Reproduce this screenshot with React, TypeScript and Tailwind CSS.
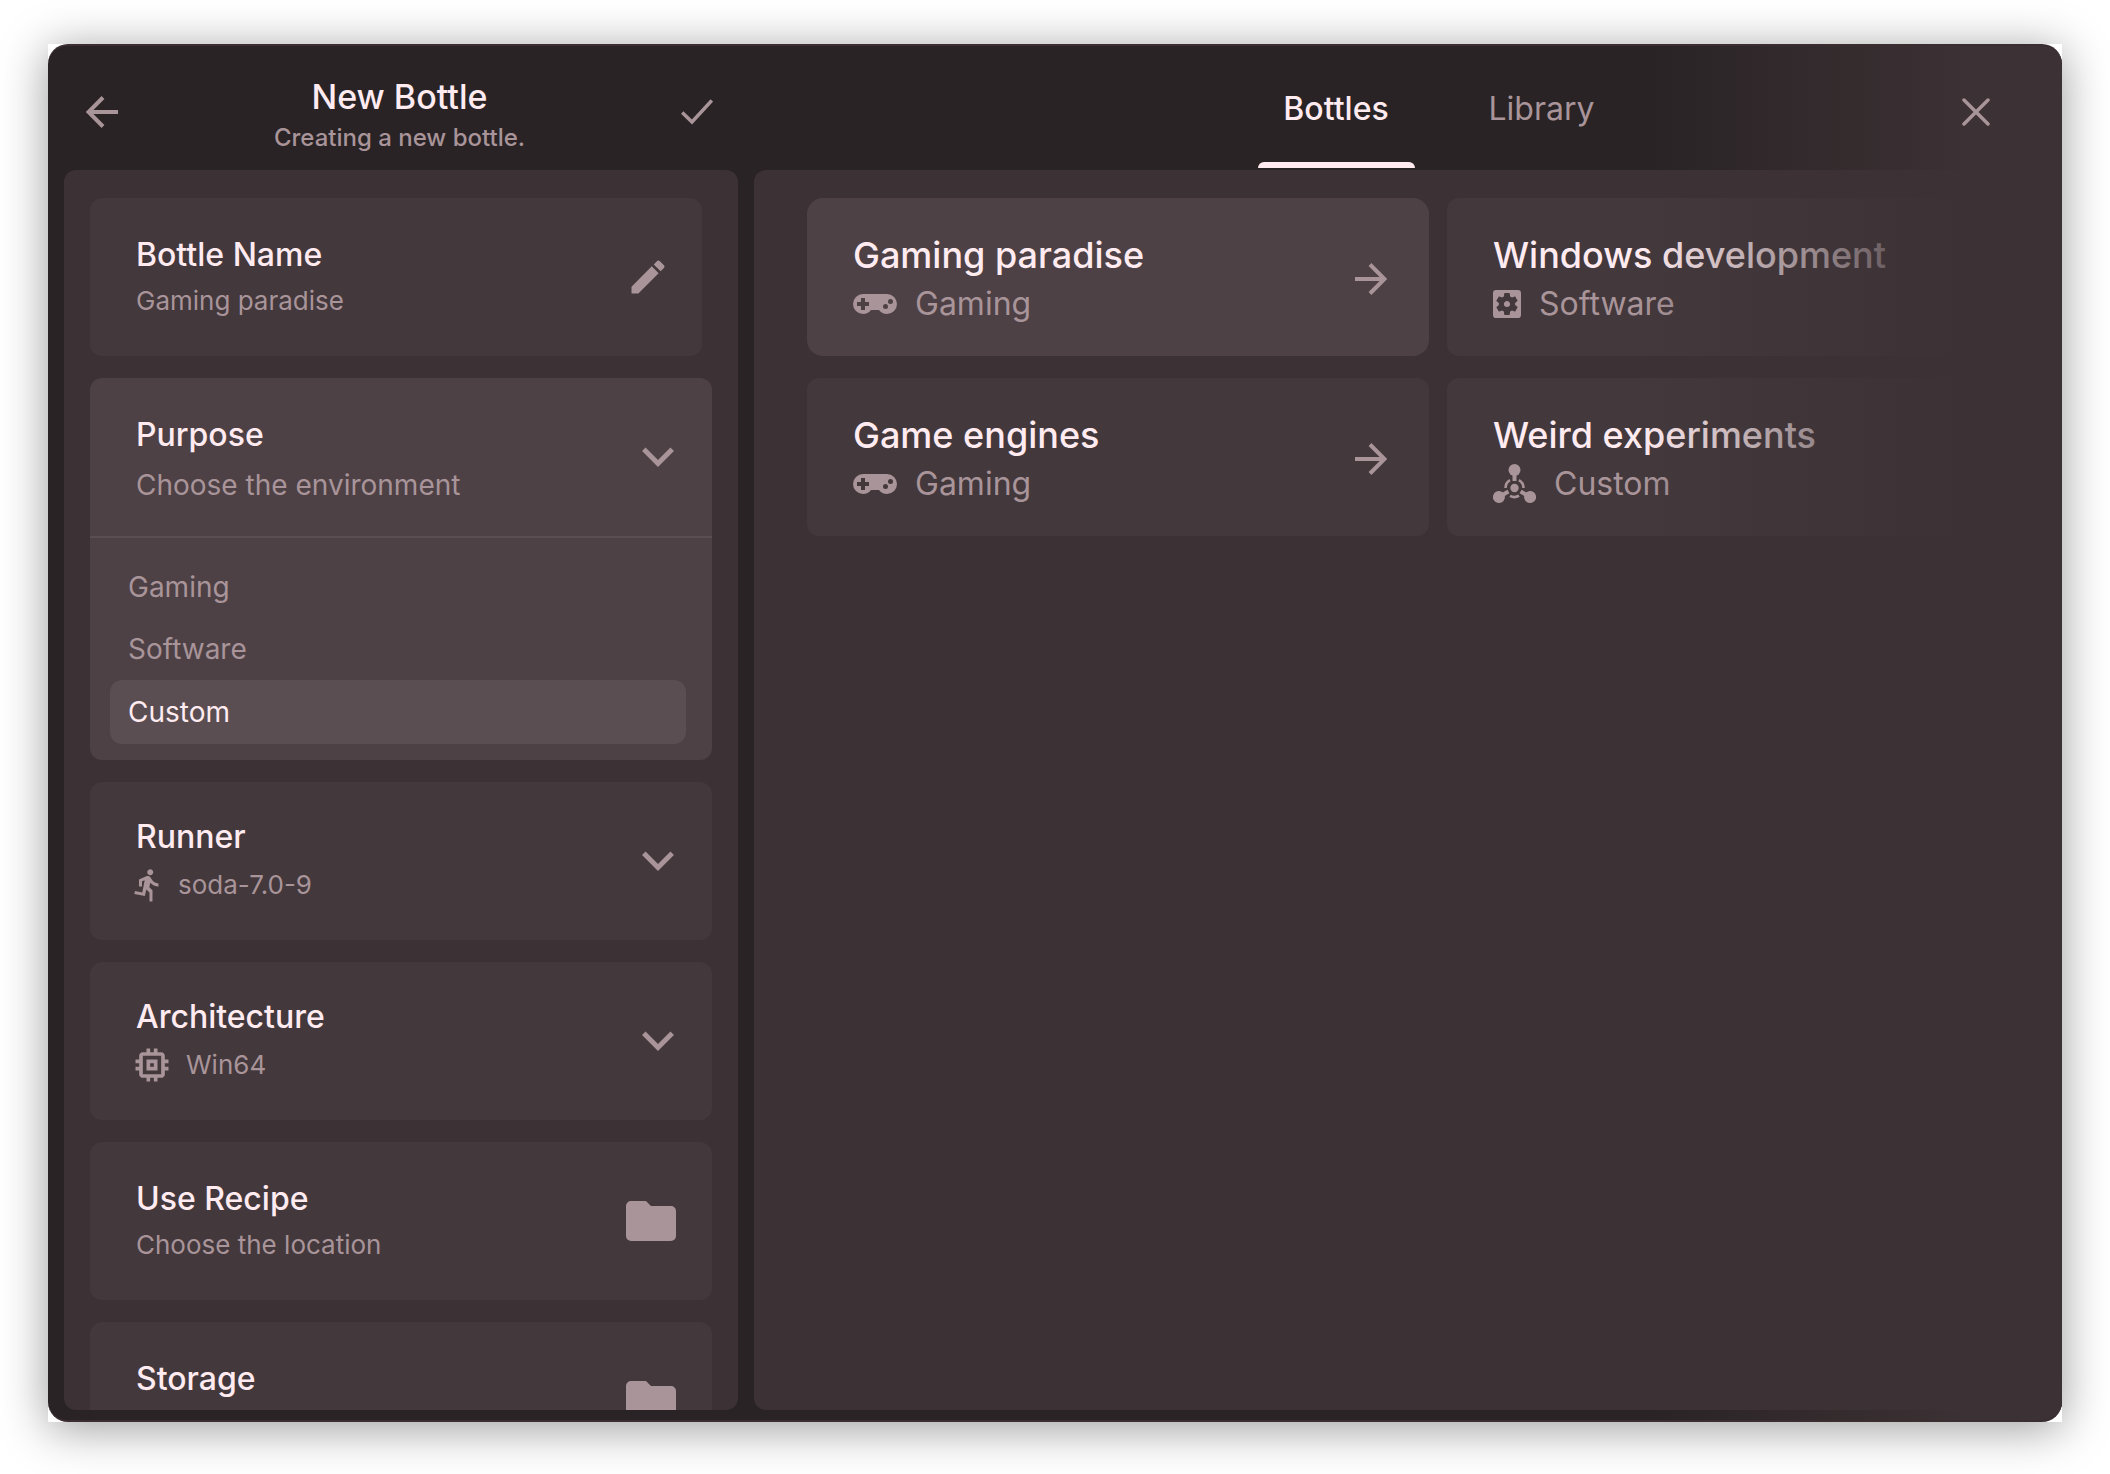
import type { ReactNode } from "react";
import { MdDirectionsRun, MdEdit, MdMemory } from "react-icons/md";

const ink = "text-[#a89499]";

function ArrowIcon({ className = "" }: { className?: string }) {
  return (
    <svg viewBox="0 0 32 32" className={`size-8 shrink-0 ${className}`} fill="none" stroke="currentColor" strokeWidth="4" aria-hidden="true">
      <path d="M0 16H30M15 1.500 29.500 16 15 30.500" />
    </svg>
  );
}

function ChevronIcon() {
  return (
    <svg viewBox="0 0 32 20" className={`h-5 w-8 shrink-0 ${ink}`} fill="none" stroke="currentColor" strokeWidth="5" aria-hidden="true">
      <path d="M1.800 2.300 16 16.400 30.200 2.300" />
    </svg>
  );
}

function FolderIcon() {
  return (
    <svg viewBox="0 0 50 40" className={`h-10 w-[50px] shrink-0 ${ink}`} fill="currentColor" aria-hidden="true">
      <path d="M5 0H20L25 5H45A5 5 0 0 1 50 10V35A5 5 0 0 1 45 40H5A5 5 0 0 1 0 35V5A5 5 0 0 1 5 0Z" />
    </svg>
  );
}

function GamepadIcon() {
  return (
    <svg viewBox="0 0 22 10" className="h-5 w-11 shrink-0" fill="currentColor" fillRule="evenodd" aria-hidden="true">
      <path d="M5 0H17a5 5 0 0 1 0 10c-1.640 0-3.090-.79-4-2H9c-.91 1.210-2.360 2-4 2A5 5 0 0 1 5 0ZM4 2v2H2v2h2v2h2V6h2V4H6V2ZM16.250 5a1.250 1.250 0 1 0 0 2.500a1.250 1.250 0 0 0 0-2.500ZM18.750 2.500a1.250 1.250 0 1 0 0 2.500a1.250 1.250 0 0 0 0-2.500Z" />
    </svg>
  );
}

function CogBoxIcon() {
  return (
    <svg viewBox="3 3 18 18" className="size-7 shrink-0" fill="currentColor" aria-hidden="true">
      <path d="M12 10c-1.100 0-2 .9-2 2s.9 2 2 2 2-.9 2-2-.9-2-2-2zm7-7H5a2 2 0 0 0-2 2v14a2 2 0 0 0 2 2h14a2 2 0 0 0 2-2V5a2 2 0 0 0-2-2zm-1.750 9c0 .23-.02.46-.05.68l1.480 1.160c.13.11.17.3.08.45l-1.400 2.420c-.09.15-.27.21-.43.15l-1.740-.7c-.36.28-.76.51-1.180.69l-.26 1.850c-.03.17-.18.3-.35.3h-2.800c-.17 0-.32-.13-.35-.29l-.26-1.850c-.43-.18-.82-.41-1.180-.69l-1.740.7c-.16.06-.34 0-.43-.15l-1.400-2.420a.35.35 0 0 1 .08-.45l1.480-1.160c-.03-.23-.05-.46-.05-.69 0-.23.02-.46.05-.68l-1.480-1.160a.35.35 0 0 1-.08-.45l1.400-2.420c.09-.15.27-.21.43-.15l1.740.7c.36-.28.76-.51 1.180-.69l.26-1.850c.03-.17.18-.3.35-.3h2.800c.17 0 .32.13.35.29l.26 1.850c.43.18.82.41 1.180.69l1.740-.7c.16-.06.34 0 .43.15l1.400 2.420c.09.15.05.34-.08.45l-1.480 1.160c.03.23.05.46.05.69z" />
    </svg>
  );
}

function MoleculeIcon() {
  return (
    <svg viewBox="0 0 43 40" className="h-10 w-[43px] shrink-0" fill="currentColor" aria-hidden="true">
      <circle cx="21.500" cy="24" r="4.200" />
      {[0, 120, 240].map((a) => (
        <g key={a} transform={`rotate(${a} 21.500 24)`}>
          <circle cx="21.500" cy="6" r="6" />
          <path d="M19.500 10h4v7h-4z" />
          <path d="M25.900 16.200A9 9 0 0 1 30.500 24" fill="none" stroke="currentColor" strokeWidth="2.600" />
        </g>
      ))}
    </svg>
  );
}

function SettingCard({ title, detail, icon, action, className = "", pad = "pr-[38px]" }: { title: string; detail?: string; icon?: ReactNode; action: ReactNode; className?: string; pad?: string }) {
  return (
    <button type="button" className={`flex h-[158px] shrink-0 items-center justify-between rounded-xl bg-[#43383c] pl-[46px] text-left ${pad} ${className}`}>
      <span className={`flex flex-col ${icon ? "gap-1" : "gap-0.5 pt-0.5"}`}>
        <span className="text-[32px] leading-[44px] font-medium text-[#ffebf0]">{title}</span>
        <span className={`flex h-11 items-center text-[26px] leading-[44px] ${ink}`}>
          {icon}
          {detail}
        </span>
      </span>
      {action}
    </button>
  );
}

function BottleCard({ title, kind, icon, active = false }: { title: string; kind: string; icon: ReactNode; active?: boolean }) {
  return (
    <button type="button" className={`flex h-[158px] w-[622px] items-center justify-between pt-1 pr-[42px] pl-[46px] text-left ${active ? "rounded-2xl bg-[#4d4145]" : "rounded-xl bg-[#43383c]"}`}>
      <span className="flex flex-col gap-1">
        <span className="text-[36px] leading-[46px] font-medium whitespace-nowrap text-[#ffebf0]">{title}</span>
        <span className={`flex h-11 items-center gap-[18px] text-[32px] leading-[44px] ${ink}`}>
          {icon}
          {kind}
        </span>
      </span>
      <ArrowIcon className={ink} />
    </button>
  );
}

export default function App() {
  return (
    <div className="h-screen bg-white px-12 pt-11 pb-[52px] font-['Inter',sans-serif]">
      <div className="h-full bg-white shadow-[0_6px_44px_rgba(0,0,0,0.4)]">
        <div className="relative flex h-full flex-col overflow-hidden rounded-[20px] border-y-2 border-[#3a2e31] bg-[#292325]">
          <header className="flex h-[124px] shrink-0">
            <div className="flex w-[706px] shrink-0 items-center justify-between pt-2 pr-[41px] pl-[38px]">
              <button type="button" aria-label="Back" className={ink}>
                <ArrowIcon className="rotate-180" />
              </button>
              <div className="pt-2 text-center">
                <h1 className="text-[34px] leading-[44px] font-medium text-[#ffebf0]">New Bottle</h1>
                <p className={`text-[24px] leading-[38px] font-medium ${ink}`}>Creating a new bottle.</p>
              </div>
              <button type="button" aria-label="Create" className={ink}>
                <svg viewBox="0 0 32 26" className="h-[26px] w-8" fill="none" stroke="currentColor" strokeWidth="3.500" aria-hidden="true">
                  <path d="M1.200 13.500 11 23 30.800 1.500" />
                </svg>
              </button>
            </div>
            <nav className="flex grow justify-center pl-[110px]">
              <a href="#bottles" className="flex w-[157px] flex-col justify-between text-center text-[32px] font-medium text-[#ffebf0]">
                <span className="pt-10 leading-[46px]">Bottles</span>
                <span className="mb-0.5 h-1.5 rounded-t-md bg-[#ffebf0]" />
              </a>
              <a href="#library" className={`w-[254px] pt-10 text-center text-[32px] leading-[46px] ${ink}`}>
                Library
              </a>
            </nav>
          </header>
          <div className="flex min-h-0 grow gap-4 pb-2.5 pl-4">
            <aside className="flex w-[674px] shrink-0 flex-col gap-[22px] overflow-hidden rounded-xl bg-[#3c3134] px-[26px] pt-7">
              <SettingCard title="Bottle Name" detail="Gaming paradise" className="mr-2.5" action={<MdEdit className={`size-11 ${ink}`} />} pad="pr-8" />
              <section className="shrink-0 rounded-xl bg-[#4d4145] pb-4">
                <button type="button" className="flex h-[158px] w-full items-center justify-between pr-[38px] pl-[46px] text-left">
                  <span className="flex flex-col gap-1.5 pt-1.5">
                    <span className="text-[32px] leading-[44px] font-medium text-[#ffebf0]">Purpose</span>
                    <span className={`text-[28px] leading-[44px] ${ink}`}>Choose the environment</span>
                  </span>
                  <ChevronIcon />
                </button>
                <ul className="border-t-2 border-[#5a4e52] pt-[18px] pr-[26px] pl-5">
                  {["Gaming", "Software", "Custom"].map((name) => (
                    <li key={name}>
                      <button type="button" className={`block w-full rounded-xl px-[18px] text-left text-[28px] ${name === "Custom" ? "h-16 bg-[#5a4e52] text-[#ffebf0]" : "h-[62px] text-[#a89499]"}`}>
                        {name}
                      </button>
                    </li>
                  ))}
                </ul>
              </section>
              <SettingCard title="Runner" detail="soda-7.0-9" icon={<MdDirectionsRun className="mr-3 -ml-1.5 size-9" />} action={<ChevronIcon />} />
              <SettingCard title="Architecture" detail="Win64" icon={<MdMemory className="mr-3 -ml-1.5 size-11" />} action={<ChevronIcon />} />
              <SettingCard title="Use Recipe" detail="Choose the location" action={<FolderIcon />} pad="pr-9" />
              <SettingCard title="Storage" action={<FolderIcon />} pad="pr-9" />
            </aside>
            <main className="min-w-0 grow overflow-hidden rounded-tl-xl rounded-bl-xl bg-[#3c3134] pt-7 pl-[53px]">
              <div className="grid w-max grid-cols-2 gap-x-[18px] gap-y-[22px]">
                <BottleCard title="Gaming paradise" kind="Gaming" icon={<GamepadIcon />} active />
                <BottleCard title="Windows development" kind="Software" icon={<CogBoxIcon />} />
                <BottleCard title="Game engines" kind="Gaming" icon={<GamepadIcon />} />
                <BottleCard title="Weird experiments" kind="Custom" icon={<MoleculeIcon />} />
              </div>
            </main>
          </div>
          <div className="pointer-events-none absolute -inset-y-0.5 right-0 w-[422px] bg-linear-to-r from-[#3c3134]/0 to-[#3c3134] to-78%" />
          <button type="button" aria-label="Close" className={`absolute top-[52px] right-[72px] ${ink}`}>
            <svg viewBox="0 0 28 28" className="size-7" fill="none" stroke="currentColor" strokeWidth="3.500" strokeLinecap="round" aria-hidden="true">
              <path d="M2 2 26 26M26 2 2 26" />
            </svg>
          </button>
        </div>
      </div>
    </div>
  );
}
